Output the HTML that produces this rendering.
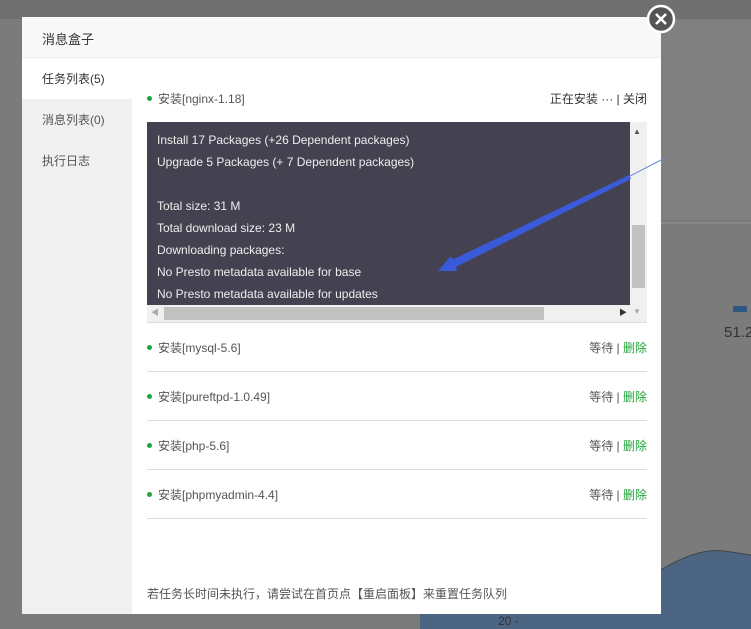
<!DOCTYPE html>
<html><head><meta charset="utf-8"><style>
*{margin:0;padding:0;box-sizing:border-box}
body{width:751px;height:629px;overflow:hidden;background:#7b7b7b;position:relative;font-family:"Liberation Sans","Noto Sans CJK SC",sans-serif;font-size:12px;color:#333}
.abs{position:absolute}
.modal{left:22px;top:17px;width:639px;height:597px;background:#fff}
.hdr{left:0;top:0;width:639px;height:41px;background:#f8f8f8;border-bottom:1px solid #eee;padding:12px 0 0 20px;font-size:13px;color:#333}
.side{left:0;top:41px;width:110px;height:556px;background:#f0f0f0}
.tab{position:absolute;left:0;width:110px;height:41px;padding:12px 0 0 20px;font-size:12px;color:#555}
.row{position:absolute;left:125px;width:500px;height:49px;border-bottom:1px solid #ddd}
.row .l{position:absolute;left:0;top:16px;color:#555}
.row .l:before{content:"";display:inline-block;width:5px;height:5px;border-radius:50%;background:#20a53a;margin-right:6px;vertical-align:2px}
.row .r{position:absolute;right:0;top:16px;color:#555}
.g{color:#20a53a}
.log{left:125px;top:105px;width:500px;height:200px;background:#444250}
.log div{color:#eee;font-size:12px;height:22px;line-height:22px;padding-left:10px}
</style></head><body>
<div class="abs" style="left:0;top:0;width:751px;height:19px;background:#6f6f6f"></div>
<div class="abs" style="left:661px;top:20px;width:90px;height:200px;background:#808080"></div>
<div class="abs" style="left:661px;top:222px;width:90px;height:2px;background:#888"></div>
<div class="abs" style="left:733px;top:306px;width:14px;height:6px;background:#2e5880"></div>
<div class="abs" style="left:724px;top:324px;font-size:15px;color:#333">51.2</div>
<svg class="abs" style="left:661px;top:500px" width="90" height="129"><path d="M0 70 Q40 45 70 52 L90 55 L90 129 L0 129Z" fill="#4b6583"/><path d="M0 70 Q40 45 70 52 L90 55" stroke="#444" fill="none"/></svg>
<div class="abs" style="left:420px;top:614px;width:241px;height:15px;background:#4b6583"></div>
<div class="abs" style="left:498px;top:614px;font-size:12px;color:#333">20 -</div>
<div class="abs modal">
<div class="abs hdr">消息盒子</div>
<div class="abs side">
<div class="tab" style="top:0;background:#fff;color:#333">任务列表(5)</div>
<div class="tab" style="top:41px">消息列表(0)</div>
<div class="tab" style="top:82px">执行日志</div>
</div>
<div class="row" style="top:58px;border:none"><span class="l" style="top:15px">安装[nginx-1.18]</span><span class="r" style="color:#333;top:15px">正在安装 ··· | 关闭</span></div>
<div class="abs log">
<div style="margin-top:7px">Install 17 Packages (+26 Dependent packages)</div>
<div>Upgrade 5 Packages (+ 7 Dependent packages)</div>
<div></div>
<div>Total size: 31 M</div>
<div>Total download size: 23 M</div>
<div>Downloading packages:</div>
<div>No Presto metadata available for base</div>
<div>No Presto metadata available for updates</div>
</div>
<div class="abs" style="left:608px;top:105px;width:17px;height:200px;background:#f0f0f0"></div>
<div class="abs" style="left:610px;top:208px;width:13px;height:63px;background:#c1c1c1"></div>
<div class="abs" style="left:611px;top:110px;font-size:8px;color:#555">▲</div>
<div class="abs" style="left:611px;top:290px;font-size:8px;color:#aaa">▼</div>
<div class="abs" style="left:125px;top:288px;width:483px;height:17px;background:#f0f0f0"></div>
<div class="abs" style="left:142px;top:290px;width:380px;height:13px;background:#c1c1c1"></div>
<div class="abs" style="left:129px;top:290px;font-size:8px;color:#aaa">◀</div>
<div class="abs" style="left:597px;top:290px;font-size:8px;color:#333">▶</div>
<div class="abs" style="left:125px;top:305px;width:500px;height:1px;background:#ddd"></div>
<div class="row" style="top:306px"><span class="l">安装[mysql-5.6]</span><span class="r">等待 | <span class="g">删除</span></span></div>
<div class="row" style="top:355px"><span class="l">安装[pureftpd-1.0.49]</span><span class="r">等待 | <span class="g">删除</span></span></div>
<div class="row" style="top:404px"><span class="l">安装[php-5.6]</span><span class="r">等待 | <span class="g">删除</span></span></div>
<div class="row" style="top:453px"><span class="l">安装[phpmyadmin-4.4]</span><span class="r">等待 | <span class="g">删除</span></span></div>
<div class="abs" style="left:125px;top:568px;color:#555">若任务长时间未执行，请尝试在首页点【重启面板】来重置任务队列</div>
</div>
<svg class="abs" style="left:430px;top:150px" width="240" height="130"><line x1="233" y1="9" x2="198" y2="27" stroke="#6f85e6" stroke-width="1"/><path d="M199 25 L24 109 L20 107 L8 121 L27 121 L26 117 L201 29Z" fill="#3a5bd9"/></svg>
<svg class="abs" style="left:645px;top:4px" width="32" height="32"><circle cx="16" cy="15" r="13" fill="#555" stroke="#fff" stroke-width="2.5"/><path d="M11 10 L21 20 M21 10 L11 20" stroke="#fff" stroke-width="2.5"/></svg>
</body></html>
